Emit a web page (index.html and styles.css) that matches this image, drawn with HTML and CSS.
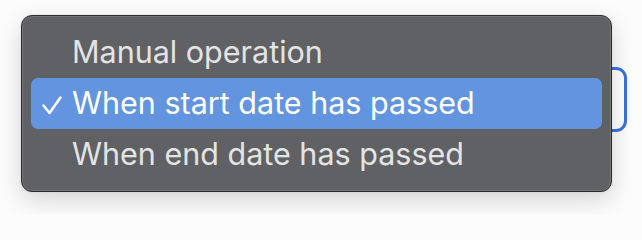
FILE: index.html
```html
<!DOCTYPE html>
<html>
<head>
<meta charset="utf-8">
<link rel="stylesheet" href="styles.css">
</head>
<body>
<div class="stage">
  <div class="select"></div>
  <div class="menu">
    <div class="item"><span class="check"></span><span class="label">Manual operation</span></div>
    <div class="item selected"><span class="check"><svg width="20" height="19" viewBox="0 0 20 19"><path d="M1.5 9.5 L7.5 17 L18.5 1.5" fill="none" stroke="#ffffff" stroke-width="2.5" stroke-linecap="round" stroke-linejoin="round"/></svg></span><span class="label">When start date has passed</span></div>
    <div class="item"><span class="check"></span><span class="label">When end date has passed</span></div>
  </div>
</div>
</body>
</html>
```

FILE: styles.css
```css
html, body {
  margin: 0;
  padding: 0;
  background: #fcfcfc;
  width: 642px;
  height: 214px;
  overflow: hidden;
}

.stage {
  position: relative;
  width: 642px;
  height: 214px;
  background: #fcfcfc;
  padding-top: 67px;
  box-sizing: border-box;
}

.select {
  margin-left: 60px;
  width: 567px;
  height: 65px;
  box-sizing: border-box;
  border: 3px solid #3b6fe0;
  border-radius: 11px;
  background: #ffffff;
}

.menu {
  position: absolute;
  left: 21px;
  top: 15px;
  width: 591px;
  height: 177px;
  box-sizing: border-box;
  padding: 11px 9px;
  background: #5f6165;
  border: 1px solid #2c2c2e;
  border-radius: 11px;
  box-shadow: inset 0 0 0 1px rgba(255,255,255,0.13), 0 8px 24px rgba(0,0,0,0.16), 0 0 3px rgba(0,0,0,0.08);
  font-family: Inter, "Noto Sans", sans-serif;
  font-size: 30.5px;
  color: #e4e4e4;
}

.item {
  display: flex;
  align-items: center;
  height: 51px;
  border-radius: 7px;
  padding-left: 11px;
}

.item.selected {
  background: #6394e0;
  color: #ffffff;
}

.check {
  width: 30px;
  display: flex;
  align-items: center;
  padding-top: 3px;
}

.label {
  letter-spacing: 0;
  padding-bottom: 2px;
}
```
